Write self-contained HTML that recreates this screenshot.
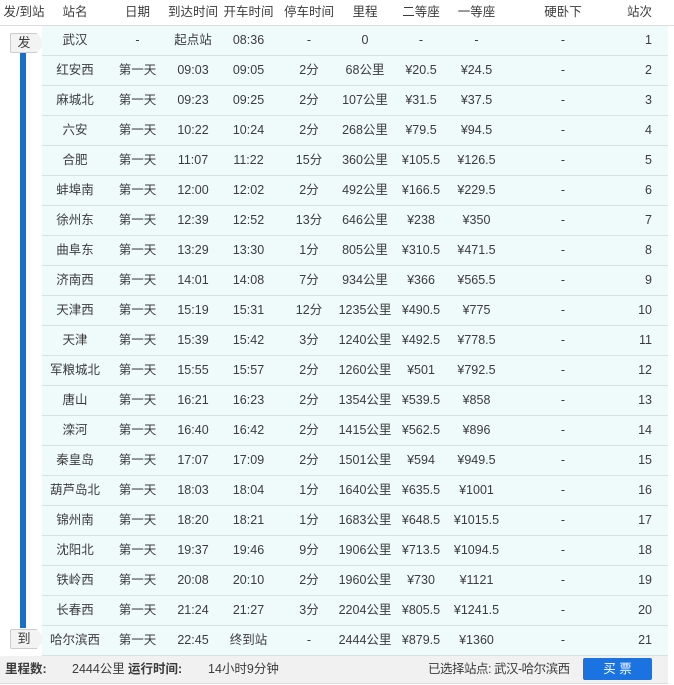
<!DOCTYPE html><html><head><meta charset="utf-8"><style>
body{margin:0;width:674px;height:685px;background:#fff;font-family:"Liberation Sans","Noto Sans CJK SC",sans-serif;font-size:12.5px;color:#3c3c3c;position:relative;overflow:hidden}
.hd{position:absolute;top:0;left:0;width:674px;height:25px;border-bottom:1px solid #ddd}
.r{position:absolute;left:42px;width:626px;height:29px;background:#effafa;border-bottom:1px solid #d9e2e2}
.c{position:absolute;top:0;line-height:29px;text-align:center;white-space:nowrap}
.hd .c{line-height:24px}
.c1{left:3px;width:60px}.c2{left:68px;width:55px}.c3{left:123px;width:56px}.c4{left:179px;width:55px}.c5{left:239px;width:56px}.c6{left:295px;width:56px}.c7{left:351px;width:56px}.c8{left:407px;width:55px}.c9{left:488px;width:66px}.c10{left:560px;width:50px;text-align:right}
.hd .c1{left:45px}.hd .c2{left:110px}.hd .c3{left:165px}.hd .c4{left:221px}.hd .c5{left:281px}.hd .c6{left:337px}.hd .c7{left:393px}.hd .c8{left:449px}.hd .c9{left:530px}.hd .c10{left:602px}
.bar{position:absolute;left:20px;top:50px;width:6px;height:578px;background:#1a6fc6}
.bd{position:absolute;left:10px;width:26px;height:18px;background:#f3f3f3;border:1px solid #ccc;border-right:none;border-radius:2px 0 0 2px;line-height:18px;text-align:center;font-size:13px}
.bd:after{content:"";position:absolute;right:-8px;top:-1px;border-left:8px solid #f3f3f3;border-top:10px solid transparent;border-bottom:10px solid transparent}
.ft{position:absolute;top:656px;left:0;width:668px;height:27px;background:#f1f1f1;border-bottom:1px solid #ddd;line-height:27px}
</style></head><body>
<div class="hd"><span class="c" style="left:0;width:48px">发/到站</span><span class="c c1">站名</span><span class="c c2">日期</span><span class="c c3">到达时间</span><span class="c c4">开车时间</span><span class="c c5">停车时间</span><span class="c c6">里程</span><span class="c c7">二等座</span><span class="c c8">一等座</span><span class="c c9">硬卧下</span><span class="c c10">站次</span></div>
<div class="bar"></div>
<div class="bd" style="top:33px">发</div>
<div class="bd" style="top:629px">到</div>
<div class="r" style="top:26px"><span class="c c1">武汉</span><span class="c c2">-</span><span class="c c3">起点站</span><span class="c c4">08:36</span><span class="c c5">-</span><span class="c c6">0</span><span class="c c7">-</span><span class="c c8">-</span><span class="c c9">-</span><span class="c c10">1</span></div>
<div class="r" style="top:56px"><span class="c c1">红安西</span><span class="c c2">第一天</span><span class="c c3">09:03</span><span class="c c4">09:05</span><span class="c c5">2分</span><span class="c c6">68公里</span><span class="c c7">¥20.5</span><span class="c c8">¥24.5</span><span class="c c9">-</span><span class="c c10">2</span></div>
<div class="r" style="top:86px"><span class="c c1">麻城北</span><span class="c c2">第一天</span><span class="c c3">09:23</span><span class="c c4">09:25</span><span class="c c5">2分</span><span class="c c6">107公里</span><span class="c c7">¥31.5</span><span class="c c8">¥37.5</span><span class="c c9">-</span><span class="c c10">3</span></div>
<div class="r" style="top:116px"><span class="c c1">六安</span><span class="c c2">第一天</span><span class="c c3">10:22</span><span class="c c4">10:24</span><span class="c c5">2分</span><span class="c c6">268公里</span><span class="c c7">¥79.5</span><span class="c c8">¥94.5</span><span class="c c9">-</span><span class="c c10">4</span></div>
<div class="r" style="top:146px"><span class="c c1">合肥</span><span class="c c2">第一天</span><span class="c c3">11:07</span><span class="c c4">11:22</span><span class="c c5">15分</span><span class="c c6">360公里</span><span class="c c7">¥105.5</span><span class="c c8">¥126.5</span><span class="c c9">-</span><span class="c c10">5</span></div>
<div class="r" style="top:176px"><span class="c c1">蚌埠南</span><span class="c c2">第一天</span><span class="c c3">12:00</span><span class="c c4">12:02</span><span class="c c5">2分</span><span class="c c6">492公里</span><span class="c c7">¥166.5</span><span class="c c8">¥229.5</span><span class="c c9">-</span><span class="c c10">6</span></div>
<div class="r" style="top:206px"><span class="c c1">徐州东</span><span class="c c2">第一天</span><span class="c c3">12:39</span><span class="c c4">12:52</span><span class="c c5">13分</span><span class="c c6">646公里</span><span class="c c7">¥238</span><span class="c c8">¥350</span><span class="c c9">-</span><span class="c c10">7</span></div>
<div class="r" style="top:236px"><span class="c c1">曲阜东</span><span class="c c2">第一天</span><span class="c c3">13:29</span><span class="c c4">13:30</span><span class="c c5">1分</span><span class="c c6">805公里</span><span class="c c7">¥310.5</span><span class="c c8">¥471.5</span><span class="c c9">-</span><span class="c c10">8</span></div>
<div class="r" style="top:266px"><span class="c c1">济南西</span><span class="c c2">第一天</span><span class="c c3">14:01</span><span class="c c4">14:08</span><span class="c c5">7分</span><span class="c c6">934公里</span><span class="c c7">¥366</span><span class="c c8">¥565.5</span><span class="c c9">-</span><span class="c c10">9</span></div>
<div class="r" style="top:296px"><span class="c c1">天津西</span><span class="c c2">第一天</span><span class="c c3">15:19</span><span class="c c4">15:31</span><span class="c c5">12分</span><span class="c c6">1235公里</span><span class="c c7">¥490.5</span><span class="c c8">¥775</span><span class="c c9">-</span><span class="c c10">10</span></div>
<div class="r" style="top:326px"><span class="c c1">天津</span><span class="c c2">第一天</span><span class="c c3">15:39</span><span class="c c4">15:42</span><span class="c c5">3分</span><span class="c c6">1240公里</span><span class="c c7">¥492.5</span><span class="c c8">¥778.5</span><span class="c c9">-</span><span class="c c10">11</span></div>
<div class="r" style="top:356px"><span class="c c1">军粮城北</span><span class="c c2">第一天</span><span class="c c3">15:55</span><span class="c c4">15:57</span><span class="c c5">2分</span><span class="c c6">1260公里</span><span class="c c7">¥501</span><span class="c c8">¥792.5</span><span class="c c9">-</span><span class="c c10">12</span></div>
<div class="r" style="top:386px"><span class="c c1">唐山</span><span class="c c2">第一天</span><span class="c c3">16:21</span><span class="c c4">16:23</span><span class="c c5">2分</span><span class="c c6">1354公里</span><span class="c c7">¥539.5</span><span class="c c8">¥858</span><span class="c c9">-</span><span class="c c10">13</span></div>
<div class="r" style="top:416px"><span class="c c1">滦河</span><span class="c c2">第一天</span><span class="c c3">16:40</span><span class="c c4">16:42</span><span class="c c5">2分</span><span class="c c6">1415公里</span><span class="c c7">¥562.5</span><span class="c c8">¥896</span><span class="c c9">-</span><span class="c c10">14</span></div>
<div class="r" style="top:446px"><span class="c c1">秦皇岛</span><span class="c c2">第一天</span><span class="c c3">17:07</span><span class="c c4">17:09</span><span class="c c5">2分</span><span class="c c6">1501公里</span><span class="c c7">¥594</span><span class="c c8">¥949.5</span><span class="c c9">-</span><span class="c c10">15</span></div>
<div class="r" style="top:476px"><span class="c c1">葫芦岛北</span><span class="c c2">第一天</span><span class="c c3">18:03</span><span class="c c4">18:04</span><span class="c c5">1分</span><span class="c c6">1640公里</span><span class="c c7">¥635.5</span><span class="c c8">¥1001</span><span class="c c9">-</span><span class="c c10">16</span></div>
<div class="r" style="top:506px"><span class="c c1">锦州南</span><span class="c c2">第一天</span><span class="c c3">18:20</span><span class="c c4">18:21</span><span class="c c5">1分</span><span class="c c6">1683公里</span><span class="c c7">¥648.5</span><span class="c c8">¥1015.5</span><span class="c c9">-</span><span class="c c10">17</span></div>
<div class="r" style="top:536px"><span class="c c1">沈阳北</span><span class="c c2">第一天</span><span class="c c3">19:37</span><span class="c c4">19:46</span><span class="c c5">9分</span><span class="c c6">1906公里</span><span class="c c7">¥713.5</span><span class="c c8">¥1094.5</span><span class="c c9">-</span><span class="c c10">18</span></div>
<div class="r" style="top:566px"><span class="c c1">铁岭西</span><span class="c c2">第一天</span><span class="c c3">20:08</span><span class="c c4">20:10</span><span class="c c5">2分</span><span class="c c6">1960公里</span><span class="c c7">¥730</span><span class="c c8">¥1121</span><span class="c c9">-</span><span class="c c10">19</span></div>
<div class="r" style="top:596px"><span class="c c1">长春西</span><span class="c c2">第一天</span><span class="c c3">21:24</span><span class="c c4">21:27</span><span class="c c5">3分</span><span class="c c6">2204公里</span><span class="c c7">¥805.5</span><span class="c c8">¥1241.5</span><span class="c c9">-</span><span class="c c10">20</span></div>
<div class="r" style="top:626px"><span class="c c1">哈尔滨西</span><span class="c c2">第一天</span><span class="c c3">22:45</span><span class="c c4">终到站</span><span class="c c5">-</span><span class="c c6">2444公里</span><span class="c c7">¥879.5</span><span class="c c8">¥1360</span><span class="c c9">-</span><span class="c c10">21</span></div>
<div class="ft">
<span style="position:absolute;left:5px;font-weight:bold">里程数:</span>
<span style="position:absolute;left:72px">2444公里</span>
<span style="position:absolute;left:128px;font-weight:bold">运行时间:</span>
<span style="position:absolute;left:208px">14小时9分钟</span>
<span style="position:absolute;left:428px;letter-spacing:-0.5px">已选择站点: 武汉-哈尔滨西</span>
<span style="position:absolute;left:583px;top:2px;width:69px;height:22px;line-height:22px;background:#1a73e0;color:#fff;text-align:center;border-radius:2px">买 票</span>
</div>
</body></html>
